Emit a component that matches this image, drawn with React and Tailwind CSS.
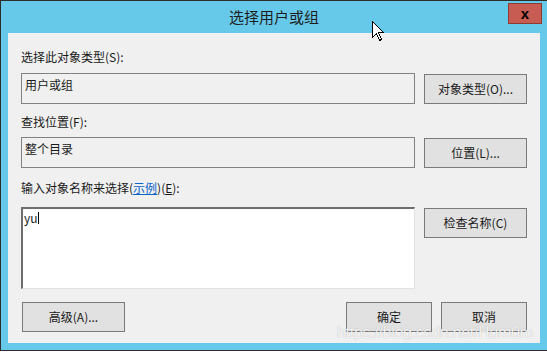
import React from "react";

const FONT = "font-['Noto_Sans_CJK_SC','Liberation_Sans',sans-serif]";

function WinButton({ children, className = "" }) {
  return (
    <button
      className={`h-[30px] border border-[#7a7a7a] bg-[#e1e1e1] text-[12px] leading-[14px] text-[#1a1a1a] ${className}`}
    >
      {children}
    </button>
  );
}

function Cursor() {
  return (
    <svg
      className="absolute left-[372px] top-[21px]"
      width="13"
      height="21"
      viewBox="0 0 13 21"
    >
      <path
        d="M0.5 0.5 L0.5 16.5 L4.5 12.5 L7.5 19.5 L9.5 18.5 L6.5 11.5 L11.5 11.5 Z"
        fill="#fff"
        stroke="#000"
        strokeWidth="1"
        shapeRendering="crispEdges"
      />
    </svg>
  );
}

export default function App() {
  return (
    <div className={`relative h-[353px] w-[547px] overflow-hidden bg-white ${FONT}`}>
      <div className="flex h-[351px] flex-col border-l border-t border-b border-[#2d2d2d] bg-[#66c9ea]">
        {/* title bar */}
        <div className="relative flex h-[32px] items-center justify-center text-[15px] leading-[18px] text-[#1e1e1e]">
          选择用户或组
          <div className="absolute right-[5px] top-[2px] flex h-[21px] w-[34px] items-center justify-center border border-[#8e3b33] bg-[#c75c52] text-[15px] font-bold leading-[14px] text-black font-['Liberation_Sans',sans-serif]">
            x
          </div>
        </div>

        {/* client area */}
        <div className="mx-[7px] flex h-[310px] flex-col bg-[#f0f0f0] px-[13px] pt-[14px] text-[12px] leading-[20px] text-[#1a1a1a]">
          <div className="h-[20px]">选择此对象类型(S):</div>
          <div className="mt-[6px] flex items-center gap-[9px]">
            <div className="h-[31px] flex-1 border border-[#828282] pl-[3px] pt-[4px] leading-[14px]">
              用户或组
            </div>
            <WinButton className="w-[103px]">对象类型(O)...</WinButton>
          </div>

          <div className="mt-[8px] h-[20px]">查找位置(F):</div>
          <div className="mt-[5px] flex items-center gap-[9px]">
            <div className="h-[31px] flex-1 border border-[#828282] pl-[3px] pt-[4px] leading-[14px]">
              整个目录
            </div>
            <WinButton className="w-[103px]">位置(L)...</WinButton>
          </div>

          <div className="mt-[10px] h-[20px]">
            输入对象名称来选择(<span className="text-[#0a64c8] underline">示例</span>)(<span className="underline">E</span>):
          </div>
          <div className="mt-[9px] flex items-start gap-[9px]">
            <div className="flex h-[82px] flex-1 items-start border-l-2 border-t-2 border-r border-b border-l-[#6e6e6e] border-t-[#6e6e6e] border-r-[#e3e3e3] border-b-[#e3e3e3] bg-white pl-[1px] pt-[2px] leading-[14px]">
              <span>yu</span>
              <span className="mt-[1px] h-[12px] w-px bg-black" />
            </div>
            <WinButton className="mt-px w-[103px]">检查名称(C)</WinButton>
          </div>

          <div className="mt-[13px] flex items-center">
            <WinButton className="ml-px w-[103px]">高级(A)...</WinButton>
            <div className="flex-1" />
            <WinButton className="w-[86px]">确定</WinButton>
            <WinButton className="ml-[9px] w-[86px]">取消</WinButton>
          </div>
        </div>
      </div>

      <div className="absolute left-[337px] top-[323px] text-[16px] leading-[20px] tracking-[-0.3px] text-white/85 font-['Liberation_Sans',sans-serif] [text-shadow:0_0_1px_rgba(0,0,0,0.3)]">
        https://blog.csdn.net/Hum0ro
      </div>

      <Cursor />
    </div>
  );
}
